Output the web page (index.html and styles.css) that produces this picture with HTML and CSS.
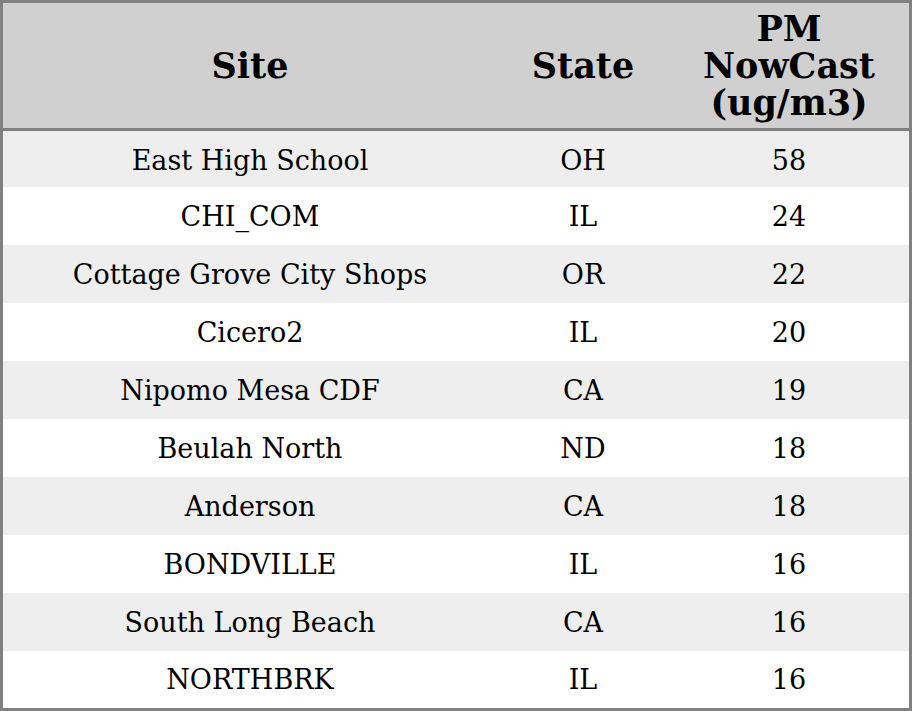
FILE: index.html
```html
<!DOCTYPE html>
<html>
<head>
<meta charset="utf-8">
<link rel="stylesheet" href="styles.css">
</head>
<body>
<table class="aq">
  <colgroup>
    <col class="c-site">
    <col class="c-state">
    <col class="c-pm">
  </colgroup>
  <thead>
    <tr class="head">
      <th>Site</th>
      <th>State</th>
      <th>PM<br>NowCast<br>(ug/m3)</th>
    </tr>
  </thead>
  <tbody>
    <tr class="r first"><td>East High School</td><td>OH</td><td>58</td></tr>
    <tr class="r"><td>CHI_COM</td><td>IL</td><td>24</td></tr>
    <tr class="r"><td>Cottage Grove City Shops</td><td>OR</td><td>22</td></tr>
    <tr class="r"><td>Cicero2</td><td>IL</td><td>20</td></tr>
    <tr class="r"><td>Nipomo Mesa CDF</td><td>CA</td><td>19</td></tr>
    <tr class="r"><td>Beulah North</td><td>ND</td><td>18</td></tr>
    <tr class="r"><td>Anderson</td><td>CA</td><td>18</td></tr>
    <tr class="r"><td>BONDVILLE</td><td>IL</td><td>16</td></tr>
    <tr class="r"><td>South Long Beach</td><td>CA</td><td>16</td></tr>
    <tr class="r last"><td>NORTHBRK</td><td>IL</td><td>16</td></tr>
  </tbody>
</table>
</body>
</html>
```
FILE: styles.css
```css
html, body {
  margin: 0;
  padding: 0;
  background: #ffffff;
}
.aq {
  width: 912px;
  border: 3px solid #808080;
  border-spacing: 0;
  table-layout: fixed;
  font-family: "DejaVu Serif", serif;
  color: #000000;
  box-sizing: border-box;
}
.c-site { width: 494px; }
.c-state { width: 172px; }
.c-pm { width: 240px; }
.head th {
  background: #d0d0d0;
  height: 125px;
  padding: 0;
  font-size: 35px;
  line-height: 37px;
  font-weight: bold;
  text-align: center;
  vertical-align: middle;
  border-bottom: 3px solid #808080;
}
.r td {
  height: 58px;
  padding: 0;
  font-size: 27px;
  text-align: center;
  vertical-align: middle;
}
.r.first td { height: 54px; padding-top: 2px; }
.r.last td { height: 57px; }
.r:nth-child(odd) td { background: #eeeeee; }
.r:nth-child(even) td { background: #ffffff; }
```
